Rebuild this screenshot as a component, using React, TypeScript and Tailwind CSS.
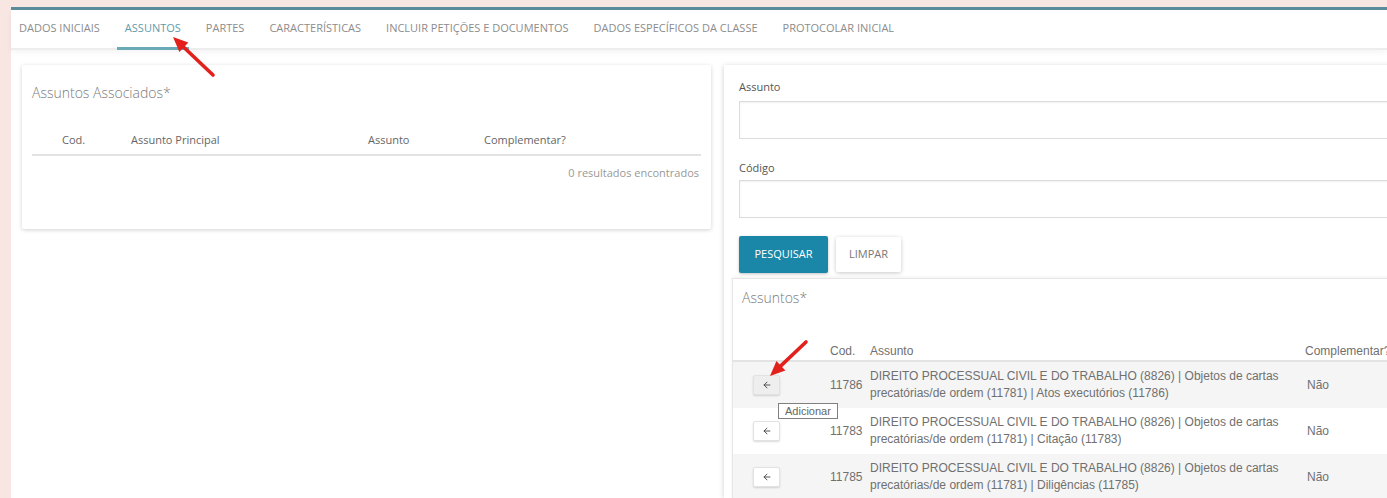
import React from "react";
import { ArrowLeft } from "lucide-react";

const tabs = [
  "Dados Iniciais",
  "Assuntos",
  "Partes",
  "Características",
  "Incluir Petições e Documentos",
  "Dados Específicos da Classe",
  "Protocolar Inicial",
];

const rows = [
  {
    cod: "11786",
    line1: "DIREITO PROCESSUAL CIVIL E DO TRABALHO (8826) | Objetos de cartas",
    line2: "precatórias/de ordem (11781) | Atos executórios (11786)",
  },
  {
    cod: "11783",
    line1: "DIREITO PROCESSUAL CIVIL E DO TRABALHO (8826) | Objetos de cartas",
    line2: "precatórias/de ordem (11781) | Citação (11783)",
  },
  {
    cod: "11785",
    line1: "DIREITO PROCESSUAL CIVIL E DO TRABALHO (8826) | Objetos de cartas",
    line2: "precatórias/de ordem (11781) | Diligências (11785)",
  },
];

function Pointer({ tail, tip }: { tail: [number, number]; tip: [number, number] }) {
  const dx = tip[0] - tail[0];
  const dy = tip[1] - tail[1];
  const len = Math.hypot(dx, dy);
  const ux = dx / len;
  const uy = dy / len;
  const head = 15;
  const half = 6.5;
  const bx = tip[0] - ux * head;
  const by = tip[1] - uy * head;
  const px = -uy * half;
  const py = ux * half;
  return (
    <g>
      <line x1={tail[0]} y1={tail[1]} x2={bx + ux * 2} y2={by + uy * 2} stroke="#e3211c" strokeWidth={3.6} strokeLinecap="round" />
      <polygon points={`${tip[0]},${tip[1]} ${bx + px},${by + py} ${bx - px},${by - py}`} fill="#e3211c" />
    </g>
  );
}

export default function App() {
  return (
    <div className="relative w-[1387px] h-[498px] overflow-hidden bg-[#f7e6e1] pl-[11px] pt-[7px] font-['Open_Sans',sans-serif]">
      <div className="h-full bg-white border-t-[3px] border-[#5b8c9e] flex flex-col">
        {/* tab strip */}
        <nav className="h-[40px] shrink-0 flex items-stretch border-b-2 border-[#ededed] shadow-[0_2px_6px_rgba(0,0,0,0.05)] text-[11px] uppercase text-[#8c8c8c]">
          {tabs.map((t, i) => (
            <div
              key={t}
              className={
                "flex items-center px-[8px] mr-[9px] border-b-[3px] -mb-[2px] whitespace-nowrap " +
                (i === 1 ? "border-[#6aa9b6] text-[#5f9cab]" : "border-transparent")
              }
            >
              {t}
            </div>
          ))}
        </nav>

        <div className="flex items-start gap-[13px] pl-[11px] pt-[15px] flex-1 min-h-0">
          {/* associated subjects */}
          <section className="w-[689px] h-[164px] shrink-0 bg-white rounded-[2px] shadow-[0_1px_4px_rgba(0,0,0,0.18)] px-[10px] pt-[18px]">
            <h2 className="text-[14px] leading-[20px] font-light text-[#7a7a7a]">Assuntos Associados*</h2>
            <div className="mt-[23px] grid grid-cols-[99px_237px_116px_1fr] h-[30px] items-center border-b-2 border-[#e3e3e3] text-[11px] text-[#666]">
              <div className="pl-[30px]">Cod.</div>
              <div>Assunto Principal</div>
              <div>Assunto</div>
              <div>Complementar?</div>
            </div>
            <div className="h-[34px] flex items-center justify-end pr-[2px] text-[11px] text-[#999]">0 resultados encontrados</div>
          </section>

          {/* search panel */}
          <section className="w-[720px] shrink-0 self-stretch bg-white shadow-[0_1px_5px_rgba(0,0,0,0.2)] pt-[14px]">
            <div className="px-[15px]">
              <label className="block text-[11px] leading-[16px] text-[#555]">Assunto</label>
              <div className="mt-[6px] h-[38px] border border-[#dcdcdc] shadow-[inset_0_1px_2px_rgba(0,0,0,0.06)]" />
              <label className="block mt-[21px] text-[11px] leading-[16px] text-[#555]">Código</label>
              <div className="mt-[4px] h-[38px] border border-[#dcdcdc] shadow-[inset_0_1px_2px_rgba(0,0,0,0.06)]" />
              <div className="mt-[18px] flex items-center gap-[8px]">
                <button className="w-[89px] h-[37px] rounded-[2px] bg-[#1a87a8] text-white text-[11px] uppercase shadow-[0_1px_3px_rgba(0,0,0,0.25)]">
                  Pesquisar
                </button>
                <button className="w-[65px] h-[35px] rounded-[2px] bg-white text-[#777] text-[11px] uppercase shadow-[0_1px_4px_rgba(0,0,0,0.22)]">
                  Limpar
                </button>
              </div>
            </div>

            {/* results */}
            <div className="ml-[8px] mt-[5px] border-t border-l border-[#e6e6e6] shadow-[0_-1px_3px_rgba(0,0,0,0.06)] pt-[9px]">
              <h3 className="pl-[9px] text-[14px] leading-[20px] font-light text-[#7a7a7a]">Assuntos*</h3>
              <div className="mt-[34px] font-['Liberation_Sans',Arial,sans-serif] text-[12px] text-[#707070]">
                <div className="grid grid-cols-[97px_40px_427px_1fr] h-[20px] items-center border-b-2 border-[#e3e3e3]">
                  <div />
                  <div>Cod.</div>
                  <div>Assunto</div>
                  <div className="pl-[8px] whitespace-nowrap">Complementar?</div>
                </div>
                {rows.map((r, i) => (
                  <div
                    key={r.cod}
                    className={
                      "grid grid-cols-[97px_40px_427px_1fr] h-[46px] items-center " +
                      (i % 2 === 0 ? "bg-[#f5f5f5]" : "bg-white")
                    }
                  >
                    <div className="pl-[20px]">
                      <div className="relative w-[27px]">
                        <button
                          className={
                            "w-[27px] h-[20px] flex items-center justify-center border border-[#e2e2e2] rounded-[2px] shadow-[0_1px_2px_rgba(0,0,0,0.15)] " +
                            (i === 0 ? "bg-[#eeeeee]" : "bg-white")
                          }
                        >
                          <ArrowLeft size={10} strokeWidth={2.2} color="#444" />
                        </button>
                        {i === 0 && (
                          <div className="absolute left-[25px] top-[28px] z-10 h-[16px] px-[6px] flex items-center bg-white border border-[#808080] text-[11px] text-[#666] whitespace-nowrap">
                            Adicionar
                          </div>
                        )}
                      </div>
                    </div>
                    <div>{r.cod}</div>
                    <div className="leading-[17px] whitespace-nowrap">
                      <div>{r.line1}</div>
                      <div>{r.line2}</div>
                    </div>
                    <div className="pl-[10px]">Não</div>
                  </div>
                ))}
              </div>
            </div>
          </section>
        </div>
      </div>

      <svg className="absolute inset-0 pointer-events-none" width={1387} height={498}>
        <Pointer tail={[213, 75]} tip={[173, 37]} />
        <Pointer tail={[806, 342]} tip={[770, 376]} />
      </svg>
    </div>
  );
}
